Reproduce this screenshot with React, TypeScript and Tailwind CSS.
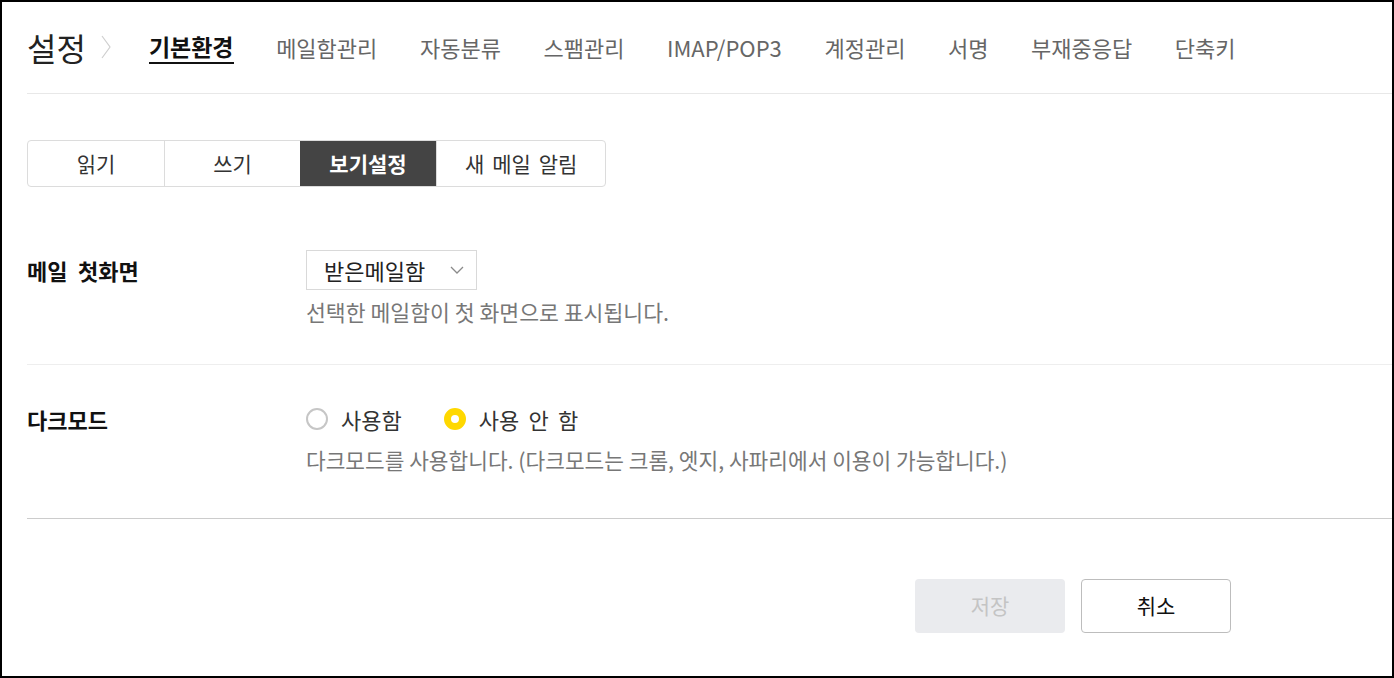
import React, { FC } from 'react'

const navItems = ['메일함관리', '자동분류', '스팸관리', 'IMAP/POP3', '계정관리', '서명', '부재중응답', '단축키']
const tabs = ['읽기', '쓰기', '보기설정', '새 메일 알림']

const Header: FC = () => (
  <div className="flex h-[92px] items-center border-b border-[#e8e8e8] pb-[2px]">
    <h1 className="text-[32px] leading-none text-[#222]">설정</h1>
    <svg className="ml-[15px] h-[24px] w-[10px]" viewBox="0 0 10 24" fill="none">
      <polyline points="1,1 9,12 1,23" stroke="#cfcfcf" strokeWidth="1.2" />
    </svg>
    <nav className="ml-[38px] flex items-center gap-[42.6px]">
      <a className="relative text-[23px] leading-none font-bold text-[#111]">
        기본환경
        <span className="absolute -bottom-[6px] left-0 right-0 h-[2px] bg-[#111]" />
      </a>
      {navItems.map((item) => (
        <a key={item} className="text-[22px] leading-none text-[#666]">
          {item}
        </a>
      ))}
    </nav>
  </div>
)

const Tabs: FC = () => (
  <div className="mt-[46px] flex h-[47px] w-fit overflow-hidden rounded-[4px] border border-[#dcdcdc]">
    {tabs.map((tab, i) => (
      <button
        key={tab}
        className={
          tab === '보기설정'
            ? 'min-w-[136px] bg-[#444] px-[28px] text-[21px] font-bold text-white [word-spacing:0.15em]'
            : `min-w-[136px] px-[28px] text-[21px] text-[#333] [word-spacing:0.15em] ${i > 0 ? 'border-l border-[#dcdcdc]' : ''}`
        }
      >
        {tab}
      </button>
    ))}
  </div>
)

const Radio: FC<{ checked?: boolean; label: string }> = ({ checked, label }) => (
  <label className="flex items-center gap-[13px]">
    {checked ? (
      <span className="h-[22px] w-[22px] rounded-full border-[7px] border-[#ffd800] bg-white" />
    ) : (
      <span className="h-[22px] w-[22px] rounded-full border-2 border-[#c6c6c6] bg-white" />
    )}
    <span className="text-[22px] leading-[24px] text-[#333] [word-spacing:0.2em]">{label}</span>
  </label>
)

export default function App() {
  return (
    <div className="box-border h-[678px] w-full border-2 border-black bg-white font-['Noto_Sans_CJK_KR',sans-serif]">
      <div className="pl-[25px]">
        <Header />
        <Tabs />

        <div className="flex border-b border-[#eeeeee] pt-[63px] pb-[40px]">
          <div className="flex h-[40px] w-[279px] items-center text-[22px] font-bold text-[#111] [word-spacing:0.25em]">
            메일 첫화면
          </div>
          <div className="flex flex-col">
            <div className="flex h-[40px] w-[171px] items-center justify-between border border-[#d9d9d9] pl-[17px] pr-[12px]">
              <span className="text-[22px] text-[#222]">받은메일함</span>
              <svg className="h-[8px] w-[14px]" viewBox="0 0 14 8" fill="none">
                <polyline points="1,1 7,7 13,1" stroke="#8a8a8a" strokeWidth="1.3" />
              </svg>
            </div>
            <p className="mt-[10px] text-[21.6px] leading-[24px] text-[#777]">
              선택한 메일함이 첫 화면으로 표시됩니다.
            </p>
          </div>
        </div>

        <div className="flex border-b border-[#cccccc] pt-[42px] pb-[46px]">
          <div className="flex h-[24px] w-[279px] items-center text-[22px] font-bold text-[#111]">다크모드</div>
          <div className="flex flex-col">
            <div className="flex items-center gap-[42px]">
              <Radio label="사용함" />
              <Radio checked label="사용 안 함" />
            </div>
            <p className="mt-[17px] text-[21.4px] leading-[24px] text-[#777]">
              다크모드를 사용합니다. (다크모드는 크롬, 엣지, 사파리에서 이용이 가능합니다.)
            </p>
          </div>
        </div>

        <div className="mt-[60px] flex justify-end gap-[16px] pr-[161px]">
          <button className="h-[54px] w-[150px] rounded-[4px] bg-[#eaebee] text-[21px] text-[#c4c4c4]">저장</button>
          <button className="h-[54px] w-[150px] rounded-[4px] border border-[#bdbdbd] bg-white text-[21px] text-[#111]">
            취소
          </button>
        </div>
      </div>
    </div>
  )
}
